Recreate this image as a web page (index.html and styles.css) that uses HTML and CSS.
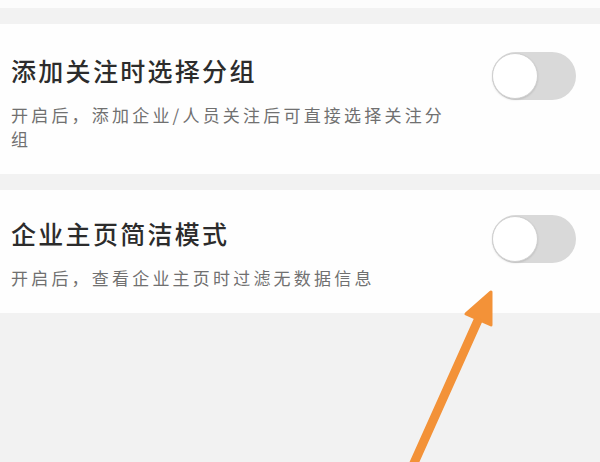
FILE: index.html
```html
<!DOCTYPE html>
<html lang="zh-CN">
<head>
  <meta charset="UTF-8" />
  <meta name="viewport" content="width=device-width, initial-scale=1.0"/>
  <title>设置</title>
  <link rel="stylesheet" href="styles.css">
</head>
<body>
  <div class="top-strip"></div>

  <div class="settings">
    <section class="setting">
      <div class="setting-head">
        <h3 class="setting-title">添加关注时选择分组</h3>
        <span class="switch" role="switch" aria-checked="false"><span class="knob"></span></span>
      </div>
      <p class="setting-desc">开启后，添加企业/人员关注后可直接选择关注分组</p>
    </section>

    <section class="setting">
      <div class="setting-head">
        <h3 class="setting-title">企业主页简洁模式</h3>
        <span class="switch" role="switch" aria-checked="false"><span class="knob"></span></span>
      </div>
      <p class="setting-desc">开启后，查看企业主页时过滤无数据信息</p>
    </section>
  </div>

  <!-- 标注箭头 -->
  <svg class="pointer" width="600" height="462" viewBox="0 0 600 462">
    <line x1="410" y1="472" x2="479" y2="318" stroke="#f39238" stroke-width="9" stroke-linecap="round" />
    <polygon points="491,292 491,325 466,314" fill="#f39238" stroke="#f39238" stroke-width="3" stroke-linejoin="round" />
  </svg>
</body>
</html>
```

FILE: styles.css
```css
body {
  margin: 0;
  height: 462px;
  background: #f2f2f2;
  font-family: "Noto Sans CJK SC", "Noto Sans", sans-serif;
  position: relative;
  overflow: hidden;
}

.top-strip {
  height: 8px;
  background: #fcfcfc;
}

.settings {
  display: flex;
  flex-direction: column;
  gap: 16px;
  margin-top: 16px;
}

.setting {
  background: #fefefe;
  padding: 28px 24px 23px 11px;
}

.setting + .setting {
  padding-top: 25px;
}

.setting-head {
  display: flex;
  justify-content: space-between;
  align-items: flex-start;
  height: 48px;
}

.setting-title {
  margin: 0;
  font-size: 25px;
  line-height: 36px;
  font-weight: 500;
  letter-spacing: 2.3px;
  color: #2c2c2c;
}

.setting-desc {
  margin: 3px 0 0;
  width: 445px;
  font-size: 17px;
  line-height: 24px;
  letter-spacing: 3.2px;
  color: #707070;
}

.switch {
  display: block;
  width: 84px;
  height: 48px;
  border-radius: 24px;
  background: #d9d9d9;
  position: relative;
}

.switch .knob {
  position: absolute;
  top: 1px;
  left: 0;
  width: 44px;
  height: 44px;
  border-radius: 50%;
  background: #fff;
  border: 1px solid #cfcfcf;
  box-shadow: 0 1px 2px rgba(0,0,0,0.12);
}

.pointer {
  position: absolute;
  top: 0;
  left: 0;
  pointer-events: none;
}
```
